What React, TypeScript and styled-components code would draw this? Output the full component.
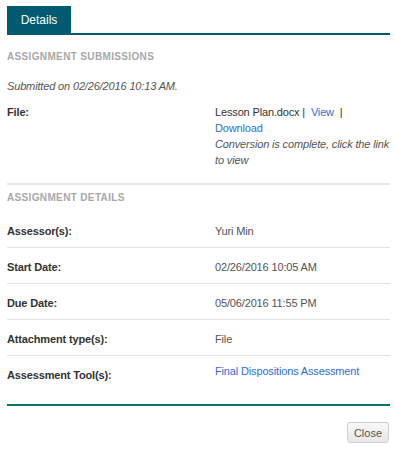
import styled, { createGlobalStyle } from 'styled-components';

const GlobalStyle = createGlobalStyle`
  html, body {
    margin: 0;
    padding: 0;
    background: #fff;
  }
  body {
    font-family: "Liberation Sans", Arial, sans-serif;
    font-size: 11px;
    letter-spacing: -0.15px;
    color: #333;
  }
`;

const Page = styled.div`
  width: 383px;
  padding: 6px 5px 0 7px;
`;

const TabBar = styled.div`
  display: flex;
  border-bottom: 2px solid #005a70;
`;

const Tab = styled.div`
  width: 64px;
  height: 27px;
  display: flex;
  align-items: center;
  justify-content: center;
  background: #005a70;
  color: #fff;
  font-size: 12px;
  letter-spacing: 0;
`;

const SectionTitle = styled.div<{ $top: number }>`
  margin-top: ${(p) => p.$top}px;
  line-height: 16px;
  font-size: 10px;
  font-weight: bold;
  color: #a8a8a8;
  letter-spacing: 0.35px;
`;

const Submitted = styled.div`
  margin-top: 13px;
  line-height: 16px;
  font-style: italic;
  color: #555;
`;

const FileRow = styled.div`
  display: flex;
  margin-top: 10px;
  line-height: 16px;
`;

const Label = styled.div<{ $drop?: number }>`
  width: 208px;
  flex-shrink: 0;
  font-weight: bold;
  color: #333;
  padding-top: ${(p) => p.$drop ?? 0}px;
`;

const Value = styled.div`
  flex: 1;
  color: #555;
`;

const FileName = styled.span`
  color: #333;
`;

const Link = styled.a`
  color: #2f6fd6;
  text-decoration: none;
  cursor: pointer;
`;

const Note = styled.div`
  font-style: italic;
  color: #555;
`;

const Separator = styled.div`
  margin-top: 15px;
  height: 2px;
  background: #e6e6e6;
`;

const DetailList = styled.div`
  margin-top: 6px;
`;

const Row = styled.div<{ $last?: boolean }>`
  display: flex;
  align-items: flex-start;
  line-height: 16px;
  padding: ${(p) => (p.$last ? '7px 0 13px' : '11px 0 8px')};
  border-bottom: ${(p) => (p.$last ? 'none' : '1px solid #e3e3e3')};
`;

const Footer = styled.div`
  margin-top: 8px;
  border-top: 2px solid #00796b;
  padding: 16px 1px 0 0;
  display: flex;
  justify-content: flex-end;
`;

const CloseButton = styled.button`
  height: 21px;
  padding: 0 6px;
  font-family: "Liberation Sans", Arial, sans-serif;
  font-size: 11px;
  color: #555;
  background: linear-gradient(#f7f7f7, #e8e8e8);
  border: 1px solid #d0d0d0;
  border-radius: 3px;
  cursor: pointer;
`;

const details: { label: string; value: string; link?: boolean }[] = [
  { label: 'Assessor(s):', value: 'Yuri Min' },
  { label: 'Start Date:', value: '02/26/2016 10:05 AM' },
  { label: 'Due Date:', value: '05/06/2016 11:55 PM' },
  { label: 'Attachment type(s):', value: 'File' },
  { label: 'Assessment Tool(s):', value: 'Final Dispositions Assessment', link: true },
];

export default function App() {
  return (
    <>
      <GlobalStyle />
      <Page>
        <TabBar>
          <Tab>Details</Tab>
        </TabBar>

        <SectionTitle $top={14}>ASSIGNMENT SUBMISSIONS</SectionTitle>
        <Submitted>Submitted on 02/26/2016 10:13 AM.</Submitted>
        <FileRow>
          <Label>File:</Label>
          <Value>
            <FileName>Lesson Plan.docx |&nbsp;</FileName> <Link>View</Link>{' '}
            <FileName>&nbsp;|</FileName>
            <br />
            <Link>Download</Link>
            <Note>Conversion is complete, click the link to view</Note>
          </Value>
        </FileRow>
        <Separator />

        <SectionTitle $top={5}>ASSIGNMENT DETAILS</SectionTitle>
        <DetailList>
          {details.map((d, i) => {
            const last = i === details.length - 1;
            return (
              <Row key={d.label} $last={last}>
                <Label $drop={last ? 4 : 0}>{d.label}</Label>
                <Value>{d.link ? <Link>{d.value}</Link> : d.value}</Value>
              </Row>
            );
          })}
        </DetailList>

        <Footer>
          <CloseButton>Close</CloseButton>
        </Footer>
      </Page>
    </>
  );
}
